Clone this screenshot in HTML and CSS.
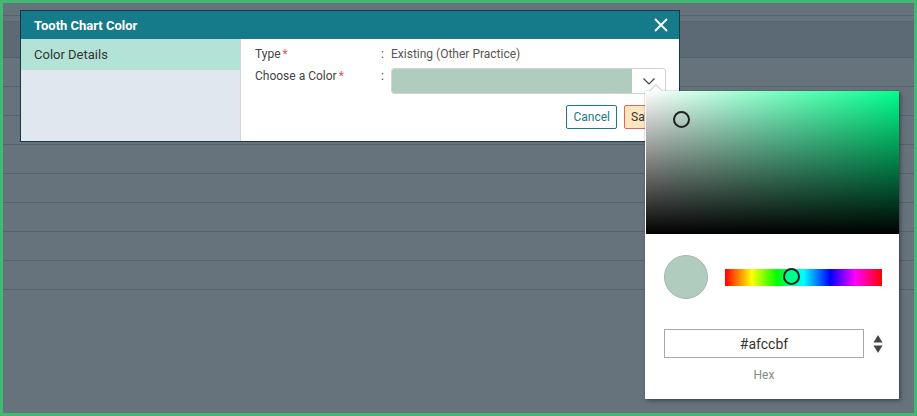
FILE: index.html
```html
<!DOCTYPE html>
<html>
<head>
<meta charset="utf-8">
<link rel="stylesheet" href="styles.css">
</head>
<body>
<div class="frame">
  <div class="bg">
    <div class="bg-top"></div>
    <div class="bg-head"></div>
    <div class="bg-row"></div>
    <div class="bg-row"></div>
    <div class="bg-row"></div>
    <div class="bg-row"></div>
    <div class="bg-row"></div>
    <div class="bg-row"></div>
    <div class="bg-row"></div>
    <div class="bg-row"></div>
  </div>

  <div class="dialog">
    <div class="dlg-head">
      <span class="dlg-title">Tooth Chart Color</span>
      <svg class="dlg-close" width="14" height="14" viewBox="0 0 14 14"><path d="M1 1 L13 13 M13 1 L1 13" stroke="#fff" stroke-width="1.8" fill="none"/></svg>
    </div>
    <div class="dlg-body">
      <div class="side">
        <div class="side-item active">Color Details</div>
      </div>
      <div class="main">
        <div class="field">
          <div class="label">Type<span class="req">*</span></div>
          <div class="colon">:</div>
          <div class="value">Existing (Other Practice)</div>
        </div>
        <div class="field">
          <div class="label">Choose a Color<span class="req">*</span></div>
          <div class="colon">:</div>
          <div class="color-input">
            <div class="color-fill"></div>
            <div class="color-toggle">
              <svg width="12" height="7" viewBox="0 0 12 7"><path d="M0.5 0.5 L6 6 L11.5 0.5" stroke="#444" stroke-width="1.2" fill="none"/></svg>
            </div>
          </div>
        </div>
        <div class="actions">
          <button class="btn btn-cancel">Cancel</button>
          <button class="btn btn-save">Save</button>
        </div>
      </div>
    </div>
  </div>

  <div class="picker">
    <div class="picker-arrow"></div>
    <div class="sat">
      <div class="sat-white"></div>
      <div class="sat-black"></div>
      <div class="sat-cursor"></div>
    </div>
    <div class="picker-controls">
      <div class="swatch"></div>
      <div class="hue">
        <div class="hue-cursor"></div>
      </div>
    </div>
    <div class="hex-row">
      <div class="hex-col">
        <div class="hex-input">#afccbf</div>
        <div class="hex-label">Hex</div>
      </div>
      <svg class="spinner" width="10" height="20" viewBox="0 0 10 20"><path d="M5 1 L9.5 8.5 L0.5 8.5 Z M5 19 L9.5 11.5 L0.5 11.5 Z" fill="#444"/></svg>
    </div>
  </div>
</div>
</body>
</html>
```

FILE: styles.css
```css
* { box-sizing: border-box; }
html, body { margin: 0; padding: 0; }
body {
  width: 917px;
  height: 416px;
  overflow: hidden;
  font-family: Roboto, "Liberation Sans", sans-serif;
}
.frame {
  position: relative;
  width: 917px;
  height: 416px;
  border: 3px solid #41b973;
  background: #67737c;
  overflow: hidden;
}
.bg { display: flex; flex-direction: column; }
.bg-top {
  height: 13px;
  border-bottom: 1px solid #57636c;
}
.bg-head {
  margin-top: 5px;
  height: 37px;
  background: #5c6a76;
  border-top: 1px solid #58656f;
  border-bottom: 1px solid #525e68;
}
.bg-row {
  height: 29px;
  border-bottom: 1px solid #56626b;
}

/* dialog */
.dialog {
  position: absolute;
  left: 17px;
  top: 7px;
  width: 660px;
  height: 132px;
  border: 1px solid #133a46;
  background: #fff;
  display: flex;
  flex-direction: column;
}
.dlg-head {
  height: 28px;
  background: #157a8a;
  display: flex;
  align-items: center;
  justify-content: space-between;
  padding: 0 11px 0 13px;
}
.dlg-title {
  color: #fff;
  font-weight: bold;
  font-size: 13px;
}
.dlg-close { display: block; }
.dlg-body {
  flex: 1;
  display: flex;
}
.side {
  width: 220px;
  background: #e1e7ee;
  border-right: 1px solid #d0d6db;
}
.side-item {
  height: 31px;
  padding: 8px 13px 0;
  font-size: 13px;
  color: #333;
}
.side-item.active { background: #b3e3d6; }
.main {
  flex: 1;
  padding: 6px 13px 0 14px;
  display: flex;
  flex-direction: column;
}
.field {
  display: flex;
  align-items: flex-start;
  font-size: 12px;
  color: #444;
  min-height: 22px;
}
.label { width: 126px; padding-top: 2px; }
.req { color: #e05454; margin-left: 2px; }
.colon { width: 10px; padding-top: 2px; }
.value { padding-top: 2px; color: #555; }
.color-input {
  width: 275px;
  height: 26px;
  margin-top: 1px;
  border: 1px solid #cfd4d8;
  border-radius: 3px;
  display: flex;
  background: #fff;
  overflow: hidden;
}
.color-fill { flex: 1; background: #afccbf; }
.color-toggle {
  width: 33px;
  display: flex;
  align-items: center;
  justify-content: center;
}
.color-toggle svg { display: block; margin-top: 1px; }
.actions {
  display: flex;
  justify-content: flex-end;
  gap: 7px;
  margin-top: 11px;
}
.btn {
  height: 24px;
  padding: 0 6px;
  font-family: Roboto, "Liberation Sans", sans-serif;
  font-size: 12px;
  border-radius: 2px;
  background: #fff;
}
.btn-cancel {
  border: 1px solid #1a7a8a;
  color: #1a7a8a;
}
.btn-save {
  border: 1px solid #d66a5e;
  background: #fde6bd;
  color: #333;
  width: 42px;
  text-align: left;
}

/* picker */
.picker {
  position: absolute;
  left: 642px;
  top: 88px;
  width: 254px;
  height: 308px;
  background: #fff;
  box-shadow: 0 0 1px rgba(0,0,0,0.4), 2px 2px 4px rgba(0,0,0,0.35);
}
.picker-arrow {
  position: absolute;
  left: 6px;
  top: -5px;
  width: 10px;
  height: 10px;
  background: #fff;
  transform: rotate(45deg);
  border-left: 1px solid #d0d0d0;
  border-top: 1px solid #d0d0d0;
}
.sat {
  position: relative;
  height: 143px;
  margin-left: 1px;
  background: #00ff8c;
  overflow: hidden;
}
.sat-white {
  position: absolute;
  inset: 0;
  background: linear-gradient(to right, #fff, rgba(255,255,255,0));
}
.sat-black {
  position: absolute;
  inset: 0;
  background: linear-gradient(to top, #000, rgba(0,0,0,0));
}
.sat-cursor {
  position: absolute;
  left: 27px;
  top: 20px;
  width: 17px;
  height: 17px;
  border: 2px solid #222;
  border-radius: 50%;
}
.picker-controls {
  display: flex;
  align-items: center;
  padding: 21px 0 0 19px;
}
.swatch {
  width: 44px;
  height: 44px;
  border-radius: 50%;
  background: #afccbf;
  border: 1px solid #a9b4af;
}
.hue {
  position: relative;
  margin-left: 17px;
  width: 157px;
  height: 17px;
  background: linear-gradient(to right, #f00 0%, #ff0 17%, #0f0 33%, #0ff 50%, #00f 67%, #f0f 83%, #f00 100%);
}
.hue-cursor {
  position: absolute;
  left: 58px;
  top: -0.5px;
  width: 17px;
  height: 17px;
  border: 2px solid #222;
  border-radius: 50%;
  background: #00ff8c;
}
.hex-row {
  display: flex;
  align-items: flex-start;
  padding: 30px 0 0 19px;
}
.hex-col {
  display: flex;
  flex-direction: column;
  align-items: center;
  width: 200px;
}
.hex-input {
  width: 200px;
  height: 29px;
  border: 1px solid #aaa;
  display: flex;
  align-items: center;
  justify-content: center;
  font-size: 14px;
  color: #333;
}
.hex-label {
  margin-top: 10px;
  font-size: 12px;
  color: #888;
}
.spinner {
  display: block;
  margin: 5px 0 0 9px;
}
```
